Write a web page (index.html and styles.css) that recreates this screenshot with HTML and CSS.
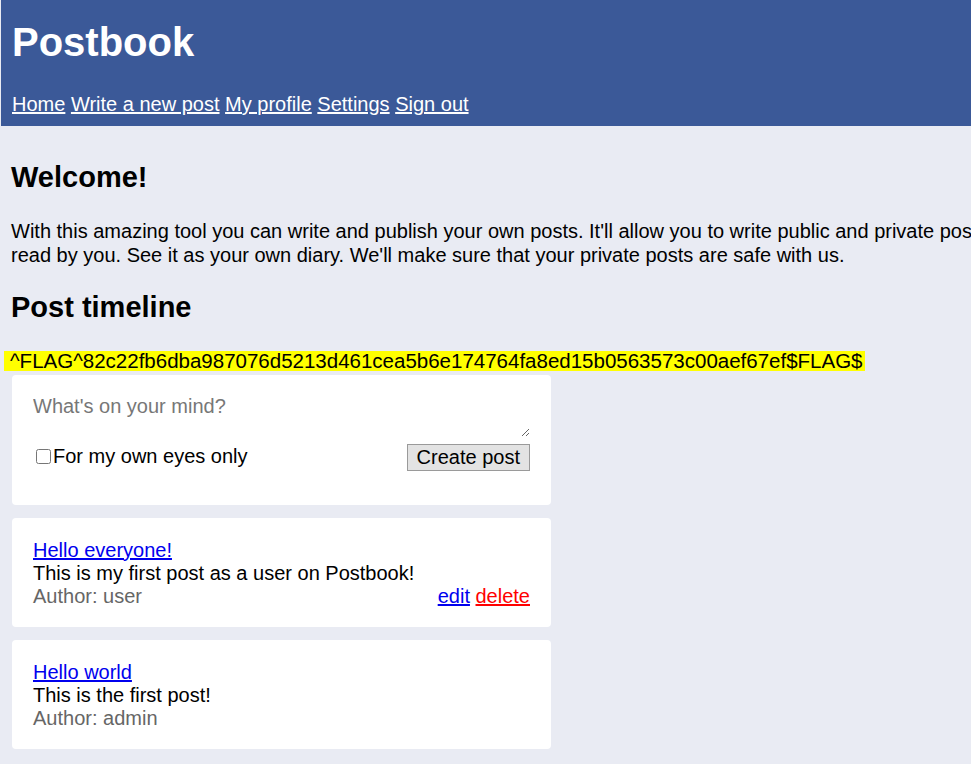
FILE: index.html
```html
<!DOCTYPE html>
<html lang="en">
<head>
    <meta charset="UTF-8">
    <title>Postbook</title>
    <link rel="stylesheet" href="styles.css">
</head>
<body>
    <div class="header">
        <h1>Postbook</h1>
        <div class="nav">
            <a href="#">Home</a>
            <a href="#">Write a new post</a>
            <a href="#">My profile</a>
            <a href="#">Settings</a>
            <a href="#">Sign out</a>
        </div>
    </div>

    <div class="content">
        <h2>Welcome!</h2>
        <p class="intro">With this amazing tool you can write and publish your own posts. It'll allow you to write public and private posts. Private posts can only be<br>read by you. See it as your own diary. We'll make sure that your private posts are safe with us.</p>

        <h2>Post timeline</h2>
        <div class="flag">^FLAG^82c22fb6dba987076d5213d461cea5b6e174764fa8ed15b0563573c00aef67ef$FLAG$</div>

        <!-- New post form -->
        <div class="card new-post">
            <form>
                <textarea placeholder="What's on your mind?" rows="2"></textarea>
                <div class="form-row">
                    <label><input type="checkbox">For my own eyes only</label>
                    <button type="button">Create post</button>
                </div>
            </form>
        </div>

        <div class="card post">
            <a href="#" class="post-title">Hello everyone!</a>
            <div>This is my first post as a user on Postbook!</div>
            <div class="post-footer">
                <span class="author">Author: user</span>
                <span><a href="#" class="edit">edit</a> <a href="#" class="delete">delete</a></span>
            </div>
        </div>

        <div class="card post">
            <a href="#" class="post-title">Hello world</a>
            <div>This is the first post!</div>
            <div class="post-footer">
                <span class="author">Author: admin</span>
            </div>
        </div>
    </div>
</body>
</html>
```

FILE: styles.css
```css
html, body {
    overflow: hidden;
}

body {
    font-family: "Liberation Sans", Arial, sans-serif;
    background-color: #e9ebf3;
    margin: 0;
    padding: 0;
    width: 1300px;
}

.header {
    background-color: #3b5998;
    color: #fff;
    padding: 19px 11px 9px 11px;
    height: 98px;
    margin-left: 1px;
}

.header h1 {
    font-size: 40px;
    margin: 0;
    line-height: 46px;
}

.nav {
    margin-top: 28px;
    font-size: 20px;
}

.nav a {
    color: #fff;
}

.content {
    padding: 0 12px 0 11px;
}

h2 {
    font-size: 29px;
    margin: 33px 0 0 0;
    line-height: 36px;
}

.intro {
    font-size: 20px;
    line-height: 24px;
    margin: 24px 0 0 0;
    white-space: nowrap;
}

.content h2 + .intro + h2 {
    margin-top: 22px;
}

.flag {
    display: inline-block;
    background-color: #ffff00;
    font-size: 20.5px;
    line-height: 20px;
    padding: 0 2px 0 6px;
    margin: 26px 0 0 -7px;
}

.card {
    background-color: #fff;
    border-radius: 4px;
    width: 497px;
    padding: 16px 21px 20px 21px;
    margin-left: 1px;
    margin-bottom: 13px;
    font-size: 20px;
    line-height: 23px;
}

.new-post {
    margin-top: 3px;
    padding-top: 18px;
    padding-bottom: 22px;
}

textarea {
    display: block;
    width: 100%;
    box-sizing: border-box;
    border: none;
    outline: none;
    padding: 2px 0 0 0;
    font-family: "Liberation Sans", Arial, sans-serif;
    font-size: 20px;
    height: 44px;
    resize: vertical;
    color: #000;
}

textarea::placeholder {
    color: #777;
}

.form-row {
    display: flex;
    justify-content: space-between;
    align-items: center;
    margin-top: 4px;
    padding-bottom: 12px;
}

.form-row label {
    display: flex;
    align-items: center;
}

.form-row input {
    margin: 0 2px 0 3px;
    width: 15px;
    height: 15px;
}

button {
    font-family: "Liberation Sans", Arial, sans-serif;
    font-size: 20px;
    background-color: #e3e3e3;
    border: 1px solid #9a9a9a;
    padding: 1px 9px;
    margin-top: 3px;
    border-radius: 0;
    color: #000;
}

.post {
    padding-top: 21px;
    padding-bottom: 19px;
}

.post-title {
    color: #0000ee;
}

.post-footer {
    display: flex;
    justify-content: space-between;
}

.author {
    color: #666;
}

.edit {
    color: #0000ee;
}

.delete {
    color: #ff0000;
}
```
